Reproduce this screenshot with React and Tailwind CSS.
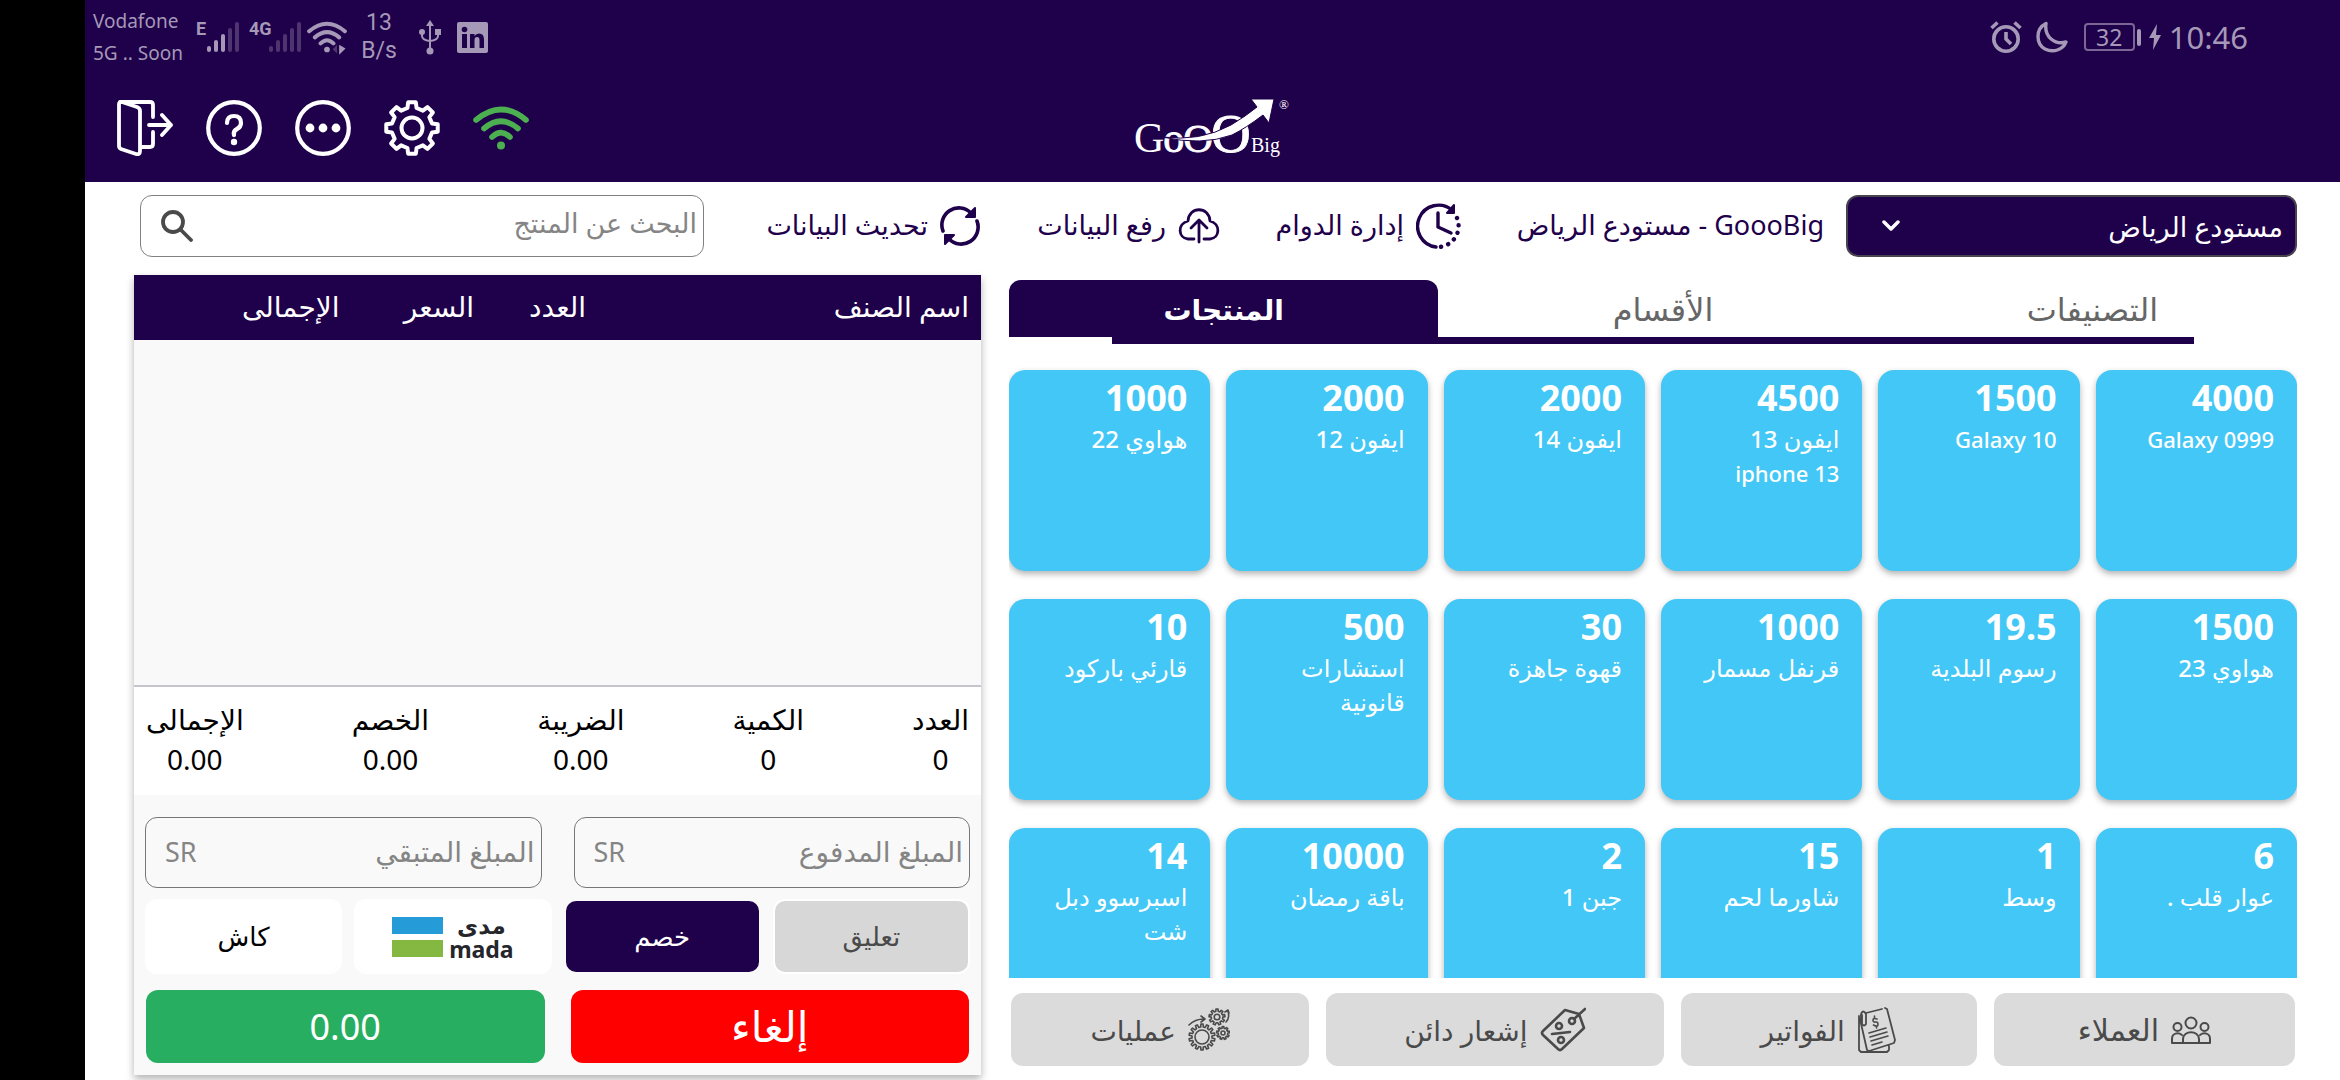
import React from "react";

const latinArabic = "font-['Noto_Sans','DejaVu_Sans',sans-serif]";

function gear(cx, cy, ro, ri, n, w = 0.5) {
  const pts = [];
  const step = (Math.PI * 2) / n;
  for (let i = 0; i < n; i++) {
    const a = i * step - Math.PI / 2;
    const o = (step * w) / 2;
    [[ri, -o * 1.15], [ro, -o * 0.75], [ro, o * 0.75], [ri, o * 1.15]].forEach(([r, d]) =>
      pts.push((cx + r * Math.cos(a + d)).toFixed(2) + " " + (cy + r * Math.sin(a + d)).toFixed(2))
    );
  }
  return "M" + pts.join("L") + "Z";
}

const line = { fill: "none", stroke: "currentColor", strokeLinecap: "round", strokeLinejoin: "round" };

function DoorIcon() {
  return (
    <svg viewBox="0 0 56 56" className="size-14" {...line} strokeWidth="3.8">
      <path d="M3 2h30q3 0 3 3v12M36 32v12q0 3-3 3h-9" />
      <path d="M5 2L20 7q3 1 3 4v40q0 4-4 3L4 49q-2-1-2-3V4q0-2 3-2z" />
      <path d="M32 25h22M45 15l9 10l-9 10" />
    </svg>
  );
}
function HelpIcon() {
  return (
    <svg viewBox="0 0 56 56" className="size-14" {...line} strokeWidth="4.2">
      <circle cx="28" cy="28" r="25.800" />
      <path d="M21 23q0-7 7-7t7 7q0 4-4 6t-3 6" />
      <circle cx="28" cy="42" r="3.200" fill="currentColor" stroke="none" />
    </svg>
  );
}
function MoreIcon() {
  return (
    <svg viewBox="0 0 56 56" className="size-14" {...line} strokeWidth="4.2">
      <circle cx="28" cy="28" r="25.800" />
      {[15, 28, 41].map((x) => (
        <circle key={x} cx={x} cy="28" r="4.4" fill="currentColor" stroke="none" />
      ))}
    </svg>
  );
}
function GearIcon() {
  return (
    <svg viewBox="0 0 56 56" className="size-14" {...line} strokeWidth="4">
      <path d={gear(28, 28, 26, 20.5, 8, 0.5)} />
      <circle cx="28" cy="28" r="10.500" />
    </svg>
  );
}
function WifiIcon({ className, traffic }) {
  return (
    <svg viewBox="0 0 56 56" className={className} {...line} strokeWidth="5.6">
      <path d="M3 20Q28-1 53 20M11 28.500Q28 14 45 28.500M19 37Q28 28 37 37" />
      <circle cx="28" cy="45.500" r="4" fill="currentColor" stroke="none" />
      {traffic && <path d="M45 39v14l9-9z" fill="currentColor" stroke="none" />}
      {traffic && <path d="M42 39v12l-6-6z" fill="currentColor" stroke="none" opacity="0.35" />}
    </svg>
  );
}
function Signal({ label, strong, offset, className }) {
  return (
    <svg viewBox={"0 0 " + (offset + 34) + " 34"} className={className} fill="#a599b7">
      <text x="0" y="15" fontSize="18" fontWeight="700" fontFamily="Roboto, sans-serif">{label}</text>
      {[0, 1, 2, 3, 4].map((i) => (
        <rect key={i} x={offset + i * 7} y={26 - i * 6} width="4" height={6 + i * 6} rx="2" opacity={i < strong ? 1 : 0.35} />
      ))}
    </svg>
  );
}
function UsbIcon() {
  return (
    <svg viewBox="0 0 22 36" className="h-9 w-[22px]" fill="none" stroke="#a599b7" strokeWidth="2">
      <path d="M11 6v26M3 13v4q0 4 8 5M19 13v4q0 4-8 5" />
      <path d="M11 1l4 6h-8z" fill="#a599b7" stroke="none" />
      <circle cx="11" cy="32" r="3.500" fill="#a599b7" stroke="none" />
      <circle cx="3" cy="13" r="3" fill="#a599b7" stroke="none" />
      <rect x="16" y="10" width="6" height="6" fill="#a599b7" stroke="none" />
    </svg>
  );
}
function LinkedInIcon() {
  return (
    <svg viewBox="0 0 31 31" className="size-[31px]">
      <rect width="31" height="31" rx="2" fill="#a599b7" />
      <circle cx="7.500" cy="7.500" r="2.800" fill="#1f004b" />
      <path d="M5 12h5v14h-5zM13 12h4.500v2q1.500-2.500 4.500-2.500q5 0 5 6v8.500h-4.500v-8q0-3-2.500-3t-2.500 3v8h-4.500z" fill="#1f004b" />
    </svg>
  );
}
function Logo() {
  return (
    <svg viewBox="0 0 158 60" className="h-[60px] w-[158px] overflow-visible" fill="#fff" fontFamily="'Liberation Serif', serif" role="img" aria-label="GoooBig">
      <text x="0" y="54" fontSize="42">
        G<tspan dx="-1" stroke="#fff" strokeWidth="0.8">o</tspan><tspan dx="-1" fontSize="41" stroke="#fff" strokeWidth="0.8">O</tspan><tspan dx="-2" fontSize="55" stroke="#fff" strokeWidth="0.8">O</tspan>
      </text>
      <path d="M28 39Q66 44 97 27Q112 18 123 9L117 1L140 1L135 25L129 17Q112 30 98 37Q68 48 28 39z" stroke="#1f004b" strokeWidth="1" />
      <text x="117" y="54" fontSize="20">Big</text>
      <text x="145" y="11" fontSize="13">®</text>
    </svg>
  );
}
function AlarmIcon() {
  return (
    <svg viewBox="0 0 32 32" className="size-8" fill="none" stroke="#a599b7" strokeWidth="3.600">
      <circle cx="16" cy="18" r="12.200" />
      <path d="M16 11v7l5 5M1.500 7l6-5.500M30.500 7l-6-5.500" />
    </svg>
  );
}
function MoonIcon() {
  return (
    <svg viewBox="0 0 32 32" className="size-8" fill="none" stroke="#a599b7" strokeWidth="3.400" strokeLinejoin="round">
      <path d="M10 2.500C-1 8 0 23 9 28C17 32 27 29 30 21C19 24 8 16 10 2.500z" />
    </svg>
  );
}
function ShiftIcon() {
  return (
    <svg viewBox="0 0 46 46" className="size-[46px]" {...line} strokeWidth="3.400">
      <path d="M20 44A21 21 0 1 1 36 7" />
      <path d="M38 2v8h-7z" fill="currentColor" strokeWidth="2" />
      <path d="M22 10v14l13 6" />
      <path d="M41 15A21 21 0 0 1 23 44" strokeDasharray="0.1 7.4" strokeWidth="4.4" />
    </svg>
  );
}
function CloudIcon() {
  return (
    <svg viewBox="0 0 42 36" className="h-9 w-[42px]" {...line} strokeWidth="2.800">
      <path d="M16 31H10C0 30-1 16 10 13C11-2 31-2 32 13C43 16 42 30 32 31H26M21 34V13M13 20l8-8l8 8" />
    </svg>
  );
}
function RefreshIcon() {
  return (
    <svg viewBox="0 0 40 40" className="size-10" {...line} strokeWidth="3.600">
      <path d="M3 25A17 17 0 0 1 31 7M37 15A17 17 0 0 1 9 33" />
      <path d="M35 2v9h-9zM5 38v-9h9z" fill="currentColor" strokeWidth="2" />
    </svg>
  );
}
function SearchIcon() {
  return (
    <svg viewBox="0 0 32 32" className="size-8" {...line} strokeWidth="3.800">
      <circle cx="12" cy="12" r="10" />
      <path d="M20 20l10 10" />
    </svg>
  );
}
function PeopleIcon() {
  return (
    <svg viewBox="0 0 40 28" className="h-7 w-10" {...line} strokeWidth="2">
      <circle cx="20" cy="7" r="5.500" />
      <circle cx="6.500" cy="11" r="4" />
      <circle cx="33.500" cy="11" r="4" />
      <path d="M12 27v-4c0-9 16-9 16 0v4M1 27v-4c0-6 6-7 10-4M39 27v-4c0-6-6-7-10-4M1 27h38" />
    </svg>
  );
}
function InvoiceIcon() {
  return (
    <svg viewBox="0 0 40 46" className="h-[46px] w-10" {...line} strokeWidth="1.800">
      <path d="M9 6l16-4M28 1l2 1l8 31l-1 3l-25 8l-2-1L3 12M2 9v34l2 2h26l2-2v-4" />
      <path d="M4 14V7q2-5 5 0v10q-2 3-4 0V8" />
      <path d="M12 26l17-5M13 30l17-5M14 34l17-5M15 38l10-3" strokeWidth="1.600" />
      <path d="M20 12q-4-1.500-4 1t2.500 2t2.500 2.500t-4.500 0.500M17.500 9v2M19.500 19v2" strokeWidth="1.600" />
    </svg>
  );
}
function TagIcon() {
  return (
    <svg viewBox="0 0 46 46" className="size-[46px]" {...line} strokeWidth="2.600">
      <path d="M39 7L25 3L3 24q-2 2 0 4L18 42q2 2 4 0L44 21L39 7M45 2L34 12" />
      <circle cx="32" cy="14" r="3" />
      <circle cx="19" cy="19" r="3" />
      <circle cx="21" cy="33" r="3" />
      <path d="M12 27l18-2" />
    </svg>
  );
}
function GearsIcon() {
  return (
    <svg viewBox="0 0 42 44" className="h-11 w-[42px]" {...line} strokeWidth="1.600">
      <path d={gear(14, 29, 13, 10, 14, 0.5)} />
      <circle cx="14" cy="29" r="7" />
      <path d={gear(29, 9, 8, 5.8, 9, 0.5)} />
      <circle cx="29" cy="9" r="2.800" />
      <path d={gear(35, 25, 6.5, 4.8, 9, 0.5)} />
      <circle cx="35" cy="25" r="2" />
      <path d="M1 17Q7 11 16 11M13 8l4 3l-4 3M38 14q4-4 2-11M37 4l3-2l1 3" />
    </svg>
  );
}

const products = [
  ["4000", "Galaxy 0999"], ["1500", "Galaxy 10"], ["4500", "ايفون 13", "iphone 13"], ["2000", "ايفون 14"], ["2000", "ايفون 12"], ["1000", "هواوي 22"],
  ["1500", "هواوي 23"], ["19.5", "رسوم البلدية"], ["1000", "قرنفل مسمار"], ["30", "قهوة جاهزة"], ["500", "استشارات", "قانونية"], ["10", "قارئي باركود"],
  ["6", "عوار قلب ."], ["1", "وسط"], ["15", "شاورما لحم"], ["2", "جبن 1"], ["10000", "باقة رمضان"], ["14", "اسبرسوو دبل", "شت"],
];
const totals = [["العدد", "0"], ["الكمية", "0"], ["الضريبة", "0.00"], ["الخصم", "0.00"], ["الإجمالى", "0.00"]];

function Header() {
  return (
    <header className="h-[182px] shrink-0 bg-[#1f004b] text-white">
      <div className="flex h-[74px] items-center justify-between pl-2 pr-[92px] text-[#a599b7]">
        <div className="flex items-center">
          <div className="w-[103px] text-[19px] leading-8">
            <div>Vodafone</div>
            <div>5G .. Soon</div>
          </div>
          <Signal label="E" strong={3} offset={11} className="h-[34px] w-[45px]" />
          <Signal label="4G" strong={0} offset={20} className="ml-2 h-[34px] w-[54px]" />
          <WifiIcon traffic className="ml-1 size-10" />
          <div className="ml-3 w-10 text-center font-[Roboto,sans-serif] text-[23px] leading-7">13 B/s</div>
          <div className="ml-5"><UsbIcon /></div>
          <div className="ml-4"><LinkedInIcon /></div>
        </div>
        <div className="flex items-center">
          <AlarmIcon />
          <div className="ml-3.5"><MoonIcon /></div>
          <div className="ml-4 flex h-7 w-[51px] items-center justify-center rounded border-2 border-[#7a6796] text-[23px]">32</div>
          <div className="ml-0.5 h-[17px] w-1 rounded bg-[#a599b7]" />
          <svg viewBox="0 0 12 26" className="ml-2 h-[26px] w-3" fill="#a599b7"><path d="M8 0L0 14h5l-1 12l8-15h-5z" /></svg>
          <div className="ml-2 text-[31px] leading-none">10:46</div>
        </div>
      </div>
      <div className="grid grid-cols-[1fr_auto_1fr] items-center">
        <nav className="flex h-[108px] items-center gap-[33px] pl-8">
          <button aria-label="خروج"><DoorIcon /></button>
          <button aria-label="مساعدة"><HelpIcon /></button>
          <button aria-label="المزيد"><MoreIcon /></button>
          <button aria-label="الإعدادات"><GearIcon /></button>
          <button aria-label="الاتصال" className="text-[#4caf50]"><WifiIcon className="size-14" /></button>
        </nav>
        <Logo />
      </div>
    </header>
  );
}

function ActionBar() {
  const action = "flex items-center gap-3 whitespace-nowrap";
  return (
    <div className="grid h-[93px] grid-cols-[473fr_362fr_242fr_240fr_276fr_564fr] items-center pb-1.5 pl-1.5 text-[27px] text-[#1f004b]">
      <div className="relative pl-[22px]">
        <select aria-label="المستودع" className="h-[62px] w-full appearance-none rounded-xl border-2 border-[#48434f] bg-[#1f004b] px-3 pt-1 text-white">
          <option>مستودع الرياض</option>
        </select>
        <svg viewBox="0 0 18 12" className="pointer-events-none absolute left-[58px] top-[25px] h-3 w-[18px] text-white" {...line} strokeWidth="3.500"><path d="M2 2l7 7l7-7" /></svg>
      </div>
      <div className="whitespace-nowrap"><bdi dir="rtl">GoooBig - مستودع الرياض</bdi></div>
      <button className={action}><ShiftIcon />إدارة الدوام</button>
      <button className={action}><CloudIcon />رفع البيانات</button>
      <button className={action}><RefreshIcon />تحديث البيانات</button>
      <label className="flex h-[62px] items-center rounded-xl border border-[#808080] pl-5 pr-1.5 text-[#4a4a4a]">
        <input aria-label="البحث عن المنتج" placeholder="البحث عن المنتج" className="min-w-0 flex-1 pb-1 outline-none placeholder:text-[#858585]" />
        <SearchIcon />
      </label>
    </div>
  );
}

function Catalog() {
  const foot = "flex h-[73px] items-center justify-center gap-3 whitespace-nowrap rounded-xl bg-[#dbdbdb]";
  return (
    <section className="flex min-h-0 min-w-0 flex-col">
      <div role="tablist" className="mt-[5px] grid h-[57px] shrink-0 grid-cols-3 text-[32px] text-[#666]">
        <button role="tab" className="pl-5">التصنيفات</button>
        <button role="tab" className="pl-5">الأقسام</button>
        <button role="tab" aria-selected="true" className="rounded-t-xl bg-[#1f004b] text-[28px] font-bold text-white">المنتجات</button>
      </div>
      <div className="mx-[8%] h-[7px] shrink-0 bg-[#1f004b]" />
      <div className="min-h-0 flex-1 overflow-hidden pt-[26px]">
        <div className="grid grid-cols-6 gap-x-4 gap-y-7">
          {products.map(([price, ...names], i) => (
            <button key={i} className="flex h-[201px] flex-col items-start rounded-2xl bg-[#43c7f6] px-[23px] text-start text-white shadow-[0_3px_6px_rgba(0,0,0,0.3)]">
              <span className="pb-0.5 pt-1.5 text-4xl font-bold leading-[44px]">{price}</span>
              {names.map((name) => (
                <span key={name} className={"whitespace-nowrap font-medium " + (/^[A-Za-z]/.test(name) ? "text-[22px] leading-[34px]" : "text-2xl leading-[34px]")}>{name}</span>
              ))}
            </button>
          ))}
        </div>
      </div>
      <div className="mb-[14px] mt-[15px] grid grid-cols-[301fr_296fr_337fr_298fr] gap-[17px] px-0.5 text-[28px] text-[#4a4a4a]">
        <button className={foot + " text-[30px]"}><PeopleIcon />العملاء</button>
        <button className={foot}><InvoiceIcon />الفواتير</button>
        <button className={foot}><TagIcon />إشعار دائن</button>
        <button className={foot}><GearsIcon />عمليات</button>
      </div>
    </section>
  );
}

function Amount({ label }) {
  return (
    <label className="flex h-[71px] min-w-0 items-center rounded-xl border border-[#777] pl-[19px] pr-1.5 text-[#858585]">
      <input aria-label={label} placeholder={label} className="min-w-0 flex-1 pb-1 outline-none placeholder:text-[#858585]" />
      <span className="text-[27px]">SR</span>
    </label>
  );
}

function Cart() {
  return (
    <section className="mb-[5px] flex min-h-0 min-w-0 flex-col bg-[#f9f9f9] text-[28px] shadow-[0_4px_8px_rgba(0,0,0,0.3)]">
      <table className="w-full table-fixed text-white">
        <thead>
          <tr className="h-[65px] bg-[#1f004b] *:whitespace-nowrap *:pb-1 *:font-normal">
            <th className="w-[42.5%] pr-3 text-start">اسم الصنف</th>
            <th className="w-[15%]">العدد</th>
            <th className="w-[13%]">السعر</th>
            <th className="w-[22%]">الإجمالى</th>
            <td />
          </tr>
        </thead>
      </table>
      <div className="flex-1 border-b-2 border-[#c8c4cd]" />
      <div className="flex h-[108px] justify-between bg-white px-3 pt-3 text-center text-black">
        {totals.map(([k, v]) => (
          <div key={k}>
            <div className="leading-10">{k}</div>
            <div className="leading-10">{v}</div>
          </div>
        ))}
      </div>
      <div className="grid grid-cols-2 gap-x-8 px-[11px] pt-[22px]">
        <Amount label="المبلغ المدفوع" />
        <Amount label="المبلغ المتبقي" />
      </div>
      <div className="grid grid-cols-4 gap-3 px-[11px] pt-[11px] text-[26px] *:h-[75px] *:rounded-xl">
        <button className="border-2 border-white bg-[#d7d7d7] text-[#4a4a4a]">تعليق</button>
        <button className="border-2 border-[#f9f9f9] bg-[#1f004b] text-white">خصم</button>
        <button aria-label="mada" className="flex items-center justify-center gap-1.5 bg-white font-bold text-[#24262b]">
          <span className="flex flex-col items-center text-[23px] leading-6"><span>مدى</span><span>mada</span></span>
          <span className="flex flex-col gap-1.5"><i className="h-[17px] w-[51px] bg-[#259bd7]" /><i className="h-[17px] w-[51px] bg-[#85b840]" /></span>
        </button>
        <button className="bg-white text-black">كاش</button>
      </div>
      <div className="grid grid-cols-2 gap-[26px] px-3 pb-3 pt-4 text-4xl text-white *:h-[73px] *:rounded-xl">
        <button className="bg-[#ff0000] text-[42px]">إلغاء</button>
        <button className="bg-[#27ae60]">0.00</button>
      </div>
    </section>
  );
}

export default function App() {
  return (
    <div className={"flex h-screen overflow-hidden bg-black " + latinArabic}>
      <div className="w-[85px] shrink-0" />
      <div className="flex min-w-0 flex-1 flex-col bg-white">
        <Header />
        <main dir="rtl" className="flex min-h-0 flex-1 flex-col pl-[49px] pr-[43px]">
          <ActionBar />
          <div className="grid min-h-0 flex-1 grid-cols-[1288fr_847fr] grid-rows-[minmax(0,1fr)] gap-7">
            <Catalog />
            <Cart />
          </div>
        </main>
      </div>
    </div>
  );
}
